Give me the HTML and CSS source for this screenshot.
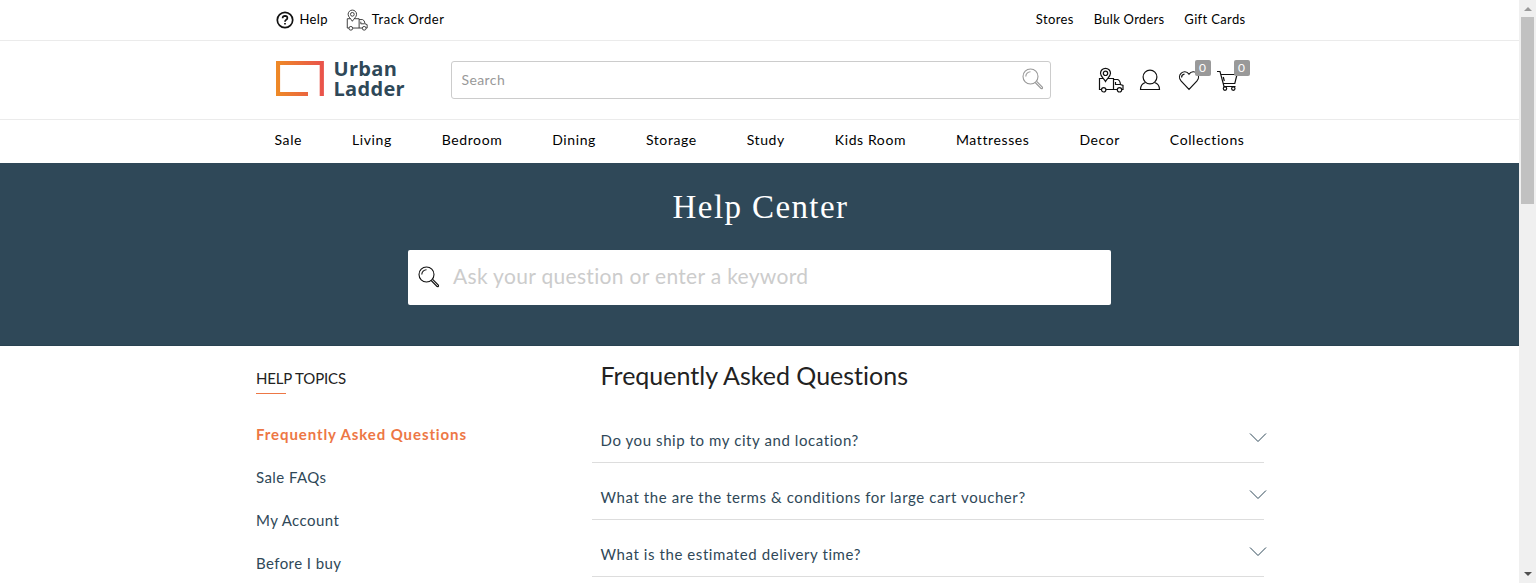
FILE: index.html
```html
<!DOCTYPE html>
<html lang="en">
<head>
<meta charset="utf-8">
<title>Help Center - Urban Ladder</title>
<link rel="stylesheet" href="styles.css">
</head>
<body>
<svg class="defs" aria-hidden="true">
  <symbol id="truck" viewBox="0 0 26 26">
    <path d="M5.300 11.500H1.500V22.500H3.500M8 22.500H19.300M9.500 11.500H15.500V22.500M15.500 12.500H19.500Q22 13 22.500 17.500L25 18.500V22.500H23.800M17.500 15V17.500H22"/>
    <path d="M7.500 14.500C6 11.500 2.500 9.500 2.500 6.300A5 5 0 0 1 12.500 6.300C12.500 9.500 9 11.500 7.500 14.500Z"/>
    <circle cx="7.500" cy="6.300" r="2.200"/><circle cx="5.700" cy="22.800" r="2.200"/><circle cx="21.500" cy="22.800" r="2.200"/>
  </symbol>
  <symbol id="lens" viewBox="0 0 22 22">
    <circle cx="8.500" cy="8.500" r="7.500"/>
    <path d="M3.800 8.500A4.700 4.700 0 0 1 8.500 3.800M13.200 14.500L19 20.500Q20.800 21 20.500 19.300L14.700 13.300"/>
  </symbol>
</svg>
<div class="page">
  <header>
    <div class="topbar"><div class="wrap">
      <a class="help"><svg width="18" height="18" viewBox="0 0 18 18"><circle cx="9" cy="9" r="7.700"/><path d="M6.600 7.200Q6.700 4.900 9 4.900Q11.400 5 11.400 7Q11.400 8.100 10.200 8.800Q9 9.500 9 10.700M9 12V13.600"/></svg><span>Help</span></a>
      <a class="track"><svg class="thin" width="22" height="22"><use href="#truck"/></svg><span>Track Order</span></a>
      <div class="right"><a class="t1">Stores</a><a class="t2">Bulk Orders</a><a class="t3">Gift Cards</a></div>
    </div></div>
    <div class="brandbar"><div class="wrap">
      <a class="logo">
        <svg width="48" height="36" viewBox="0 0 48 36"><defs><linearGradient id="frame" gradientUnits="userSpaceOnUse" x1="0" y1="0" x2="48" y2="0"><stop offset="0" stop-color="#ee8a26"/><stop offset="1" stop-color="#e9524c"/></linearGradient></defs><path d="M32 33H2V2H45.800V35" fill="none" stroke="url(#frame)" stroke-width="4.200"/></svg>
        <span class="wordmark">Urban<br>Ladder</span>
      </a>
      <div class="search"><span>Search</span><svg width="22" height="22"><use href="#lens"/></svg></div>
      <div class="actions">
        <svg width="26" height="26"><use href="#truck"/></svg>
        <svg width="22" height="22" viewBox="0 0 22 22"><circle cx="11" cy="8" r="6.900"/><path d="M6.500 13.500Q1.500 15 1.500 20.500H20.500Q20.500 15 15.500 13.500"/></svg>
        <span class="tool"><svg width="22" height="22" viewBox="0 0 22 22"><path d="M11 20.300L3.200 12.200C-2 6.500 6 -1.300 11 5.200C16 -1.300 24 6.500 18.800 12.200ZM3.600 8.500Q3.600 5.600 6.500 5.200"/></svg><b>0</b></span>
        <span class="tool"><svg width="22" height="22" viewBox="0 0 22 22"><path d="M0 2.500H3L7 17.500H18.500M4 5.500H20L17.800 14.500H6.200M6.300 8L7.300 12"/><circle cx="8" cy="19.600" r="1.700"/><circle cx="16.300" cy="19.600" r="1.700"/></svg><b>0</b></span>
      </div>
    </div></div>
    <nav class="wrap"><a>Sale</a><a>Living</a><a>Bedroom</a><a>Dining</a><a>Storage</a><a>Study</a><a>Kids Room</a><a>Mattresses</a><a>Decor</a><a>Collections</a></nav>
  </header>
  <section class="hero">
    <h1>Help Center</h1>
    <div class="ask"><svg width="22" height="22"><use href="#lens"/></svg><span>Ask your question or enter a keyword</span></div>
  </section>
  <main>
    <aside>
      <h2>HELP TOPICS</h2>
      <ul><li class="active">Frequently Asked Questions</li><li>Sale FAQs</li><li>My Account</li><li>Before I buy</li></ul>
    </aside>
    <section class="faq">
      <h2>Frequently Asked Questions</h2>
      <div class="question"><span>Do you ship to my city and location?</span><svg width="18" height="10" viewBox="0 0 18 10"><path d="M1 .5L9 8.500L17 .5"/></svg></div>
      <div class="question"><span>What the are the terms &amp; conditions for large cart voucher?</span><svg width="18" height="10" viewBox="0 0 18 10"><path d="M1 .5L9 8.500L17 .5"/></svg></div>
      <div class="question"><span>What is the estimated delivery time?</span><svg width="18" height="10" viewBox="0 0 18 10"><path d="M1 .5L9 8.500L17 .5"/></svg></div>
    </section>
  </main>
</div>
<div class="scrollbar"><i class="up"></i><div class="thumb"></div><i class="down"></i></div>
</body>
</html>
```
FILE: styles.css
```css
* { box-sizing: border-box; }
body { margin: 0; height: 583px; overflow: hidden; display: flex; font-family: Lato, "Liberation Sans", sans-serif; font-variant-ligatures: none; color: #000; background: #fff; }
svg { fill: none; stroke: #111; stroke-width: 1.1; flex: none; display: block; }
a, span, li, h1, h2 { white-space: nowrap; }
.defs { position: absolute; width: 0; height: 0; }
.page { width: 1519px; height: 583px; overflow: hidden; flex: none; }
.wrap { width: 970px; margin: 0 auto; display: flex; align-items: center; }
.topbar { height: 41px; border-bottom: 1px solid #ebebeb; font-size: 13px; letter-spacing: .35px; }
.topbar .wrap { height: 39px; }
.topbar a { display: flex; align-items: center; }
.topbar a span, .right { margin-top: -1px; }
.help svg { stroke-width: 1.7; margin: 1px 6px 0 1px; }
.track { margin-left: 18px; letter-spacing: .5px; }
.track svg { margin: 1px 4px 0 0; }
.thin { stroke: #333; }
.topbar .right { display: flex; gap: 20px; margin-left: auto; margin-right: -1px; }
.t1 { letter-spacing: .4px; }
.t2 { letter-spacing: .25px; }
.brandbar { height: 79px; border-bottom: 1px solid #ebebeb; }
.brandbar .wrap { height: 78px; }
.logo { display: flex; width: 176px; padding-left: 1px; margin-top: -2px; }
.logo > svg { margin-top: 1px; }
.wordmark { margin: -1px 0 0 10px; color: #2f4858; font: 700 20px/20px "Open Sans", sans-serif; letter-spacing: .3px; }
.search { width: 600px; height: 38px; border: 1px solid #ccc; border-radius: 3px; display: flex; align-items: center; justify-content: space-between; padding: 0 6px 2px 10px; color: #999; font-size: 14px; letter-spacing: .4px; }
.search svg { stroke: #999; }
.actions { display: flex; align-items: center; margin-left: 47px; gap: 16px; }
.actions svg { stroke-width: 1.2; }
.actions > svg:nth-child(2) { margin-left: -1px; }
.tool { position: relative; left: 1px; }
.tool + .tool { margin-left: 1px; }
.tool b { position: absolute; left: 17px; top: -9px; width: 16px; height: 16px; border-radius: 2px; background: #999; color: #fff; font-size: 12px; font-weight: 400; line-height: 16px; text-align: center; }
nav.wrap { height: 43px; padding: 0 0 4px; justify-content: space-between; font-size: 14px; letter-spacing: .6px; }
.hero { height: 183px; background: #2f4858; color: #fff; display: flex; flex-direction: column; align-items: center; border-bottom: 1px solid #294251; }
h1 { font: 400 33px/40px "Liberation Serif", serif; letter-spacing: 1.4px; margin: 24px 0 23px 2px; }
.ask { width: 703px; height: 55px; border-radius: 2px; background: #fff; display: flex; align-items: center; padding: 0 10px 2px; color: #ccc; font-size: 21px; letter-spacing: .32px; gap: 13px; }
.ask span { margin-top: -2px; }
main { width: 1008px; margin: 0 auto; padding-left: .5px; display: flex; }
aside { width: 335.5px; flex: none; }
aside h2 { font-size: 15px; line-height: 20px; font-weight: 400; letter-spacing: -.15px; color: #222; margin: 22px 0 0; display: flex; flex-direction: column; }
aside h2::after { content: ""; width: 30px; height: 1px; background: #ed7745; margin-top: 5px; }
ul { list-style: none; padding: 0; margin: 29px 0 0; color: #2f4858; font-size: 15px; letter-spacing: .42px; }
li { height: 43px; line-height: 22px; }
.active { color: #ed7745; font-weight: 700; letter-spacing: .9px; }
.faq { width: 672px; }
.faq h2 { margin: 12px 0 24px 9px; font-size: 25px; line-height: 34px; font-weight: 400; color: #222; }
.question { height: 57px; border-bottom: 1px solid #ddd; padding: 23px 0 0 9px; display: flex; justify-content: space-between; color: #2f4858; font-size: 15px; line-height: 22px; letter-spacing: .58px; }
.question:first-of-type { height: 47px; padding-top: 13px; }
.question svg { stroke: #2f4858; stroke-width: 1; margin: 4px -3px 0 0; }
.scrollbar { width: 17px; height: 583px; background: #f0f0f0; display: flex; flex-direction: column; align-items: center; justify-content: space-between; padding: 7px 0; }
.thumb { width: 13px; height: 187px; margin: 6px 0 auto; background: #c1c1c1; }
.up, .down { border: 4px solid transparent; border-top: 0; border-bottom-color: #999; }
.down { border-top: 4px solid #505050; border-bottom: 0; }
```
